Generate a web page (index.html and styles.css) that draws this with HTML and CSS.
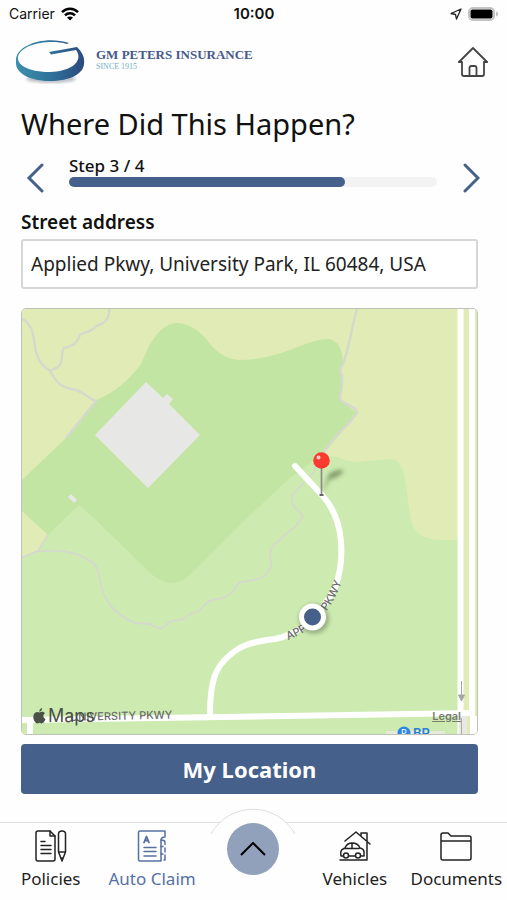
FILE: index.html
```html
<!DOCTYPE html>
<html lang="en">
<head>
    <meta charset="UTF-8">
    <meta name="viewport" content="width=device-width, initial-scale=1.0">
    <title>Where Did This Happen?</title>
    <link rel="stylesheet" href="styles.css">
</head>
<body>
    <div class="status-bar">
        <div class="carrier">
            <span>Carrier</span>
            <svg width="18" height="14" viewBox="0 0 18 14" fill="none" stroke="#000" stroke-width="2.6">
                <path d="M1 5.2C5.5 .6 12.500 .6 17 5.200"/>
                <path d="M4 8.300C6.800 5.500 11.200 5.500 14 8.300"/>
                <path d="M9 13.500L6 10.500C7.700 9 10.300 9 12 10.500Z" fill="#000" stroke="none"/>
            </svg>
        </div>
        <span class="time">10:00</span>
        <div class="battery">
            <svg width="12" height="12" viewBox="0 0 12 12" fill="none" stroke="#222" stroke-width="1.300" stroke-linejoin="round">
                <path d="M11 1L1 5.500L5.500 6.500L6.500 11Z"/>
            </svg>
            <svg width="31" height="14" viewBox="0 0 31 14">
                <rect x="1" y="1" width="25" height="12" rx="4" fill="#fff" stroke="#c4c4c4" stroke-width="2"/>
                <rect x="2.500" y="2.500" width="22" height="9" rx="2" fill="#000"/>
                <path d="M28 4.500C31 5.500 31 8.500 28 9.500Z" fill="#c4c4c4"/>
            </svg>
        </div>
    </div>

    <header class="header">
        <div class="brand">
            <svg width="70" height="48" viewBox="0 0 70 48">
                <defs>
                    <linearGradient id="ring" x1="0" y1="0" x2="1" y2="0">
                        <stop offset="0" stop-color="#3d90ac"/>
                        <stop offset=".5" stop-color="#2f729a"/>
                        <stop offset="1" stop-color="#2c4a80"/>
                    </linearGradient>
                    <filter id="soft"><feGaussianBlur stdDeviation="1.500"/></filter>
                </defs>
                <ellipse cx="36" cy="41" rx="25" ry="4" fill="#b9bfc6" filter="url(#soft)"/>
                <path d="M54 5C30 -3 1 7 1 22V26C2 37 18 43 35 43C53 43 68 37 69 26C70 19 67 14 62 9L34 14L36 16.500L61 12C68 21 60 33 35 34C13 34 2 27 3 19C6 6 34 1 52 6Z" fill="url(#ring)"/>
            </svg>
            <div class="brand-text">
                <span class="brand-name">GM PETERS INSURANCE</span>
                <span class="brand-since">SINCE 1915</span>
            </div>
        </div>
        <button class="icon-button" aria-label="Home">
            <svg width="32" height="32" viewBox="0 0 32 32" fill="none" stroke="#444" stroke-width="1.800" stroke-linejoin="round" stroke-linecap="round">
                <path d="M2 16L16 2L30 16"/>
                <path d="M2 16H5V28Q5 30 7 30H25Q27 30 27 28V16H30"/>
                <path d="M12.500 30V22Q12.500 20 14.500 20H17.500Q19.500 20 19.500 22V30"/>
            </svg>
        </button>
    </header>

    <main>
        <h1>Where Did This Happen?</h1>

        <div class="steps">
            <button class="step-arrow" aria-label="Previous step">
                <svg width="18" height="30" viewBox="0 0 18 30"><path d="M16 2L3 15L16 28"/></svg>
            </button>
            <div class="step-info">
                <span class="step-label">Step 3 / 4</span>
                <div class="progress"><div class="progress-fill" style="width: 75%"></div></div>
            </div>
            <button class="step-arrow" aria-label="Next step">
                <svg width="18" height="30" viewBox="0 0 18 30"><path d="M3 2L16 15L3 28"/></svg>
            </button>
        </div>

        <div class="form">
            <label for="address">Street address</label>
            <input id="address" type="text" value="Applied Pkwy, University Park, IL 60484, USA">

            <div class="map">
                <svg class="map-canvas" viewBox="22 309 455 425">
                    <defs>
                        <filter id="blur" x="-50%" y="-50%" width="200%" height="200%"><feGaussianBlur stdDeviation="2"/></filter>
                        <path id="applied" d="M288 640C315 630 336 608 347 565"/>
                        <path id="university" d="M70 721L190 718"/>
                    </defs>
                    <rect x="21" y="308" width="457" height="428" fill="#e1ebb5"/>

                    <!-- Woods and grass -->
                    <path fill="#c3e5a3" d="M21 481L67 437L96 400Q122 390 141 364L148 348Q162 322 178 323Q197 325 210 344Q224 360 240 360Q262 360 290 350Q318 338 330 339Q341 342 343 360L340 370L343 382L340 400L357 413L325 452L320 600H150L48 535L21 510Z"/>
                    <path fill="#cdebb0" d="M79 505L96 520L150 573Q171 592 190 575L245 520L290 478L322 455L338 457Q352 464 365 461L390 459Q402 458 405 480L411 520Q415 539 440 540H459V736H21V558L38 551L48 535Z"/>

                    <!-- Buildings -->
                    <path fill="#e7e8e6" d="M146 382L163 398L167 394L173 399L169 404L200 435L148 488L95 435Z"/>
                    <path fill="#e7e8e6" d="M71 494L77 500L74 503L68 497Z"/>

                    <!-- Trails -->
                    <g fill="none" stroke="#d5d8cd" stroke-width="2.400">
                        <path d="M21 318C35 325 33 340 36 352C40 365 46 368 50 371C58 385 62 387 72 389C82 390 87 398 96 401L66 438"/>
                        <path d="M109 308C110 322 102 324 96 326C90 334 84 331 80 335C76 345 72 346 64 348C60 352 65 360 58 367L50 371"/>
                        <path d="M357 308L353 325C350 340 346 360 340 370C345 382 340 390 340 399C345 406 357 406 357 413C350 424 330 440 324 452"/>
                        <path stroke-width="1.800" d="M324 452L313 473L292 495C288 508 305 512 302 518C292 535 286 530 280 540C265 548 272 560 271 567C265 580 255 580 247 581L239 583C230 598 222 599 212 600C202 602 205 612 190 614C182 623 175 618 168 623C162 631 158 629 150 624L135 623C115 615 103 600 100 580C97 560 90 562 85 558C70 550 55 550 38 551L21 558M38 551L48 535"/>
                    </g>

                    <!-- Roads -->
                    <g fill="none" stroke="#fff" stroke-width="6">
                        <path d="M460.500 308V736M472 308V715"/>
                        <path d="M21 720L475 713M30 720V736"/>
                        <path stroke-linecap="round" d="M295 466L322 495C345 520 345 560 335 588C320 615 300 634 275 639C250 642 240 646 230 655C215 667 210 682 210 714"/>
                    </g>
                    <rect x="459" y="716" width="8" height="20" fill="#e8e9e2"/>
                    <rect x="470" y="716" width="8" height="20" fill="#fff"/>
                    <path d="M461.500 718V736" stroke="#aaa"/>
                    <path d="M461.500 681V698M458.500 695L461.500 701L464.500 695Z" fill="#a5a5a5" stroke="#a5a5a5"/>
                    <path d="M386 732.500H445" stroke="#e6ead9" stroke-width="3"/>

                    <text class="road-label"><textPath href="#university">UNIVERSITY PKWY</textPath></text>
                    <text class="road-label"><textPath href="#applied">APPLIED PKWY</textPath></text>
                    <circle cx="404" cy="733" r="6.500" fill="#2b86e8"/>
                    <text class="poi-icon" x="401" y="736">P</text>
                    <text class="poi-label" x="413" y="738">BP</text>

                    <!-- Current position -->
                    <circle cx="314" cy="619" r="15" fill="#000" opacity=".25" filter="url(#blur)"/>
                    <circle cx="312.500" cy="617" r="13.500" fill="#fff"/>
                    <circle cx="312.500" cy="617" r="8.500" fill="#46608a"/>

                    <!-- Pin -->
                    <path d="M322 493L329 474Q338 468 344 471Q338 478 330 479Z" fill="#3c4b28" opacity=".5" filter="url(#blur)"/>
                    <path d="M321.500 468V495" stroke="#888" stroke-width="1.600"/>
                    <path d="M319.500 495H323.500" stroke="#666" stroke-width="2"/>
                    <circle cx="321.500" cy="460.500" r="8.300" fill="#fc3a30"/>
                    <circle cx="318.500" cy="457.500" r="2" fill="#ffd0cc"/>
                </svg>
                <div class="map-credits">
                    <span class="map-brand">
                        <svg width="13" height="16" viewBox="0 0 13 16" fill="#4b5147">
                            <path d="M6.500 4.500C8 3.500 10.500 3.300 12 5.300C9.500 7 10 10 12.500 11C11.500 14 9.500 16.200 7.800 15.200Q6.500 14.500 5.200 15.200C3 16.300 .3 12.500 .3 9C.3 4.500 4 3 6.500 4.500Z"/>
                            <path d="M6.300 3.700C6.200 1.800 7.500 .4 9.200 .1C9.400 2 8 3.600 6.300 3.700Z"/>
                        </svg>
                        Maps
                    </span>
                    <a href="#" class="legal">Legal</a>
                </div>
            </div>

            <button class="primary-button">My Location</button>
        </div>
    </main>

    <nav class="tab-bar">
        <a href="#" class="tab">
            <svg width="32" height="32" viewBox="0 0 32 32">
                <path d="M3 1H15L20 6V29Q20 31 18 31H3Q1 31 1 29V3Q1 1 3 1Z"/>
                <path d="M15 1V6H20"/>
                <path d="M6 11.500H10M6 15.500H16M6 19.500H16M6 23.500H16"/>
                <path d="M23.500 4Q23.500 1 27 1Q30.500 1 30.500 4V22L27 31L23.500 22ZM23.500 22H30.500M26 28H28"/>
            </svg>
            <span>Policies</span>
        </a>
        <a href="#" class="tab active">
            <svg width="32" height="32" viewBox="0 0 32 32">
                <path d="M25 31H4Q2.500 31 2.500 29.500V2.500Q2.500 1 4 1H29V7Q25 7 25 10.500V31"/>
                <path d="M25 10Q29 10 29 12.500V14.500M29 18V22M25 16.500H27M25 24H27M29 25V30H28"/>
                <path d="M8 12.500L10.500 6.500L13 12.500M9 10.500H12" stroke-width="1.800"/>
                <path d="M8 17.500H20M8 21.500H20M8 26H20"/>
            </svg>
            <span>Auto Claim</span>
        </a>
        <div class="menu">
            <svg class="menu-arc" width="86" height="26" viewBox="0 0 86 26">
                <path d="M1 26A48 48 0 0 1 85 26"/>
            </svg>
            <button class="menu-button" aria-label="Open menu">
                <svg width="26" height="14" viewBox="0 0 26 14"><path d="M1 13L13 1L25 13"/></svg>
            </button>
        </div>
        <a href="#" class="tab">
            <svg width="32" height="32" viewBox="0 0 32 32">
                <path d="M6 11L17 2L31 14M22 6V3H28V11M28 12V30H1"/>
                <path d="M4 26H2Q1 20 4 19L6 18Q8 13 13 13Q19 13 21 18Q25 19 25 22V26H22M10 26H16M6 18.500H20M13 13V18"/>
                <circle cx="7" cy="25.500" r="2.500"/>
                <circle cx="19" cy="25.500" r="2.500"/>
            </svg>
            <span>Vehicles</span>
        </a>
        <a href="#" class="tab">
            <svg width="32" height="32" viewBox="0 0 32 32">
                <path d="M1 5Q1 3 3 3H8L11 6H29Q31 6 31 8V28Q31 30 29 30H3Q1 30 1 28ZM1 11H31"/>
            </svg>
            <span>Documents</span>
        </a>
    </nav>
</body>
</html>
```
FILE: styles.css
```css
* {
    box-sizing: border-box;
}
body {
    margin: 0;
    min-height: 100vh;
    display: flex;
    flex-direction: column;
    font-family: "Noto Sans", "Open Sans", sans-serif;
    color: #111;
    background-color: #fefefe;
}
button {
    padding: 0;
    border: none;
    background: none;
    font-family: inherit;
    cursor: pointer;
}
svg {
    display: block;
}

/* Status bar */
.status-bar {
    display: grid;
    grid-template-columns: 1fr auto 1fr;
    align-items: center;
    height: 27px;
    padding: 0 8px 0 9px;
    font-family: Inter, sans-serif;
    font-size: 14px;
}
.carrier,
.battery {
    display: flex;
    align-items: center;
    gap: 6px;
}
.battery {
    justify-content: flex-end;
}
.time {
    font-size: 15px;
    font-weight: 600;
}

/* Header */
.header {
    display: flex;
    justify-content: space-between;
    align-items: center;
    height: 77px;
    padding: 0 18px 8px 15px;
}
.brand {
    display: flex;
    align-items: center;
    gap: 11px;
}
.brand-text {
    display: flex;
    flex-direction: column;
    padding-bottom: 4px;
    font-family: "Liberation Serif", serif;
}
.brand-name {
    font-size: 13px;
    line-height: 14px;
    font-weight: bold;
    color: #46598c;
}
.brand-since {
    font-size: 8px;
    line-height: 10px;
    color: #6fb0c8;
}

/* Title and steps */
h1 {
    margin: 0;
    padding: 0 21px;
    font-size: 29px;
    line-height: 40px;
    font-weight: 400;
}
.steps {
    display: grid;
    grid-template-columns: 20px 1fr 20px;
    gap: 24px;
    height: 38px;
    margin-top: 11px;
    padding: 0 26px 0 25px;
}
.step-arrow {
    display: flex;
    justify-content: center;
    align-self: end;
}
.step-arrow svg {
    fill: none;
    stroke: #45608a;
    stroke-width: 3px;
    stroke-linecap: round;
}
.step-label {
    display: block;
    font-size: 17px;
    line-height: 22px;
    font-weight: 500;
}
.progress {
    height: 10px;
    border-radius: 5px;
    background-color: #f3f3f3;
}
.progress-fill {
    height: 10px;
    border-radius: 5px;
    background-color: #45608a;
}

/* Form */
.form {
    display: flex;
    flex-direction: column;
    padding: 17px 29px 27px 21px;
}
label {
    font-size: 19px;
    line-height: 24px;
    font-weight: 600;
}
input {
    height: 50px;
    margin: 5px 0 19px;
    padding: 0 8px;
    border: 2px solid #d6d6d6;
    border-radius: 3px;
    font-family: inherit;
    font-size: 19px;
    color: #222;
    background-color: #fff;
}
.map {
    position: relative;
    overflow: hidden;
    border: 1px solid #bfc2b8;
    border-radius: 5px;
}
.map-canvas {
    width: 100%;
    height: auto;
}
.road-label,
.map-credits,
.poi-label,
.poi-icon {
    font-family: Inter, sans-serif;
}
.road-label {
    font-size: 11px;
    font-weight: 500;
    fill: #6b6b6b;
}
.poi-label {
    font-size: 13px;
    font-weight: 600;
    fill: #2b7fd8;
}
.poi-icon {
    font-size: 9px;
    fill: #fff;
}
.map-credits {
    position: absolute;
    left: 11px;
    right: 16px;
    bottom: 8px;
    display: flex;
    justify-content: space-between;
    align-items: center;
    color: #4b5147;
}
.map-brand {
    display: flex;
    align-items: center;
    gap: 2px;
    font-size: 18px;
    line-height: 20px;
}
.legal {
    font-size: 11px;
    font-weight: 600;
    color: #777c70;
}
.primary-button {
    height: 50px;
    margin-top: 9px;
    border-radius: 4px;
    font-size: 22px;
    font-weight: 700;
    line-height: 48px;
    color: #fff;
    background-color: #45608a;
}

/* Bottom tabs */
.tab-bar {
    display: grid;
    grid-template-columns: repeat(5, 1fr);
    height: 78px;
    margin-top: auto;
    border-top: 1px solid #ddd;
}
.tab {
    display: flex;
    flex-direction: column;
    align-items: center;
    gap: 6px;
    padding-top: 7px;
    font-size: 17px;
    line-height: 22px;
    white-space: nowrap;
    text-decoration: none;
    color: #222;
}
.tab svg {
    fill: none;
    stroke: currentColor;
    stroke-width: 1.5px;
    stroke-linejoin: round;
    stroke-linecap: round;
}
.active {
    color: #5570a5;
}
.menu {
    position: relative;
    display: flex;
    justify-content: center;
}
.menu-arc {
    position: absolute;
    top: -15px;
    left: 50%;
    margin-left: -43px;
    fill: #fefefe;
    stroke: #ddd;
}
.menu-button {
    position: relative;
    display: flex;
    justify-content: center;
    align-items: center;
    width: 52px;
    height: 52px;
    border-radius: 50%;
    background-color: #92a1bb;
}
.menu-button svg {
    fill: none;
    stroke: #000;
    stroke-width: 2px;
}
```
